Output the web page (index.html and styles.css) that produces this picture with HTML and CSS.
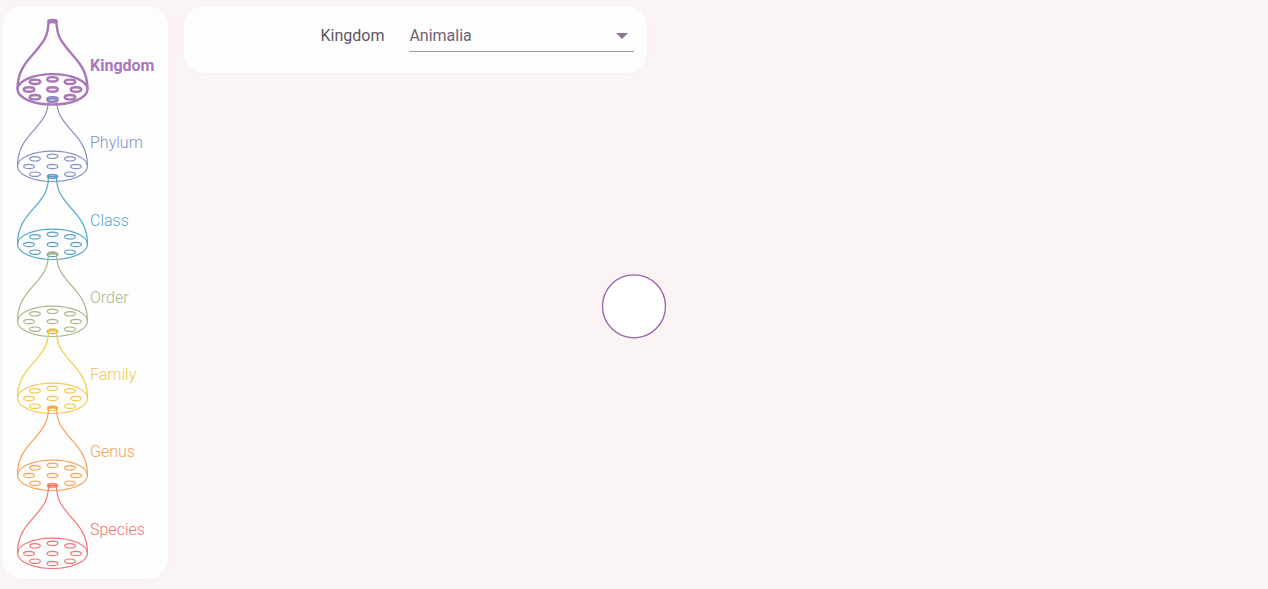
FILE: index.html
```
<!DOCTYPE html>
<html lang="en">
<head>
<meta charset="utf-8">
<meta name="viewport" content="width=device-width, initial-scale=1">
<title>Taxonomy</title>
<link rel="stylesheet" href="styles.css">
</head>
<body>
<svg class="canvas" aria-hidden="true"><circle class="node" cx="50%" cy="52%" r="31.5"/></svg>
<svg class="defs" aria-hidden="true">
  <symbol id="cone" viewBox="0 0 73 90">
    <path d="M32.500 3C32.400 18 28 23 19 34C10 44 1.500 53 1.500 71M40.500 3C40.600 18 45 23 54 34C63 44 71.500 53 71.500 71"/>
    <ellipse cx="36.500" cy="2.800" rx="4" ry=".9"/>
    <path d="M32.500 4.500Q36.500 3.500 40.500 4.500"/>
    <ellipse cx="36.500" cy="71.300" rx="35" ry="15.200"/>
    <ellipse cx="36.500" cy="61.300" rx="5.300" ry="2.200"/>
    <ellipse cx="19" cy="63.800" rx="5.300" ry="2.200"/>
    <ellipse cx="54" cy="63.800" rx="5.300" ry="2.200"/>
    <ellipse cx="13" cy="71.500" rx="5.300" ry="2.200"/>
    <ellipse cx="36.500" cy="71.500" rx="5.300" ry="2.200"/>
    <ellipse cx="60" cy="71.500" rx="5.300" ry="2.200"/>
    <ellipse cx="19" cy="79.200" rx="5.300" ry="2.200"/>
    <ellipse cx="54" cy="79.200" rx="5.300" ry="2.200"/>
    <ellipse cx="36.500" cy="81.500" rx="5.300" ry="2.200"/>
  </symbol>
</svg>
<div class="app">
  <nav class="ranks" aria-label="Taxonomic ranks">
    <button class="rank kingdom active" type="button"><svg class="cone"><use href="#cone"/></svg><span>Kingdom</span></button>
    <button class="rank phylum" type="button"><svg class="cone"><use href="#cone"/></svg><span>Phylum</span></button>
    <button class="rank class" type="button"><svg class="cone"><use href="#cone"/></svg><span>Class</span></button>
    <button class="rank order" type="button"><svg class="cone"><use href="#cone"/></svg><span>Order</span></button>
    <button class="rank family" type="button"><svg class="cone"><use href="#cone"/></svg><span>Family</span></button>
    <button class="rank genus" type="button"><svg class="cone"><use href="#cone"/></svg><span>Genus</span></button>
    <button class="rank species" type="button"><svg class="cone"><use href="#cone"/></svg><span>Species</span></button>
  </nav>
  <form class="filter">
    <label for="kingdom">Kingdom</label>
    <div class="field">
      <select id="kingdom"><option>Animalia</option></select>
      <svg class="arrow" viewBox="0 0 12 6" aria-hidden="true"><path d="M0 0H12L6 6Z"/></svg>
    </div>
  </form>
</div>
</body>
</html>
```
FILE: styles.css
```
* {
  box-sizing: border-box;
}

body {
  margin: 0;
  background: #faf4f4;
  color: #5f5563;
  font: 16px/20px Roboto, sans-serif;
}

.canvas {
  position: absolute;
  inset: 0;
  width: 100%;
  height: 100%;
}

.node {
  fill: #fff;
  stroke: #9862a8;
  stroke-width: 1.3;
}

.defs {
  position: absolute;
  width: 0;
  height: 0;
}

.app {
  position: relative;
  display: flex;
  align-items: flex-start;
  gap: 16px;
  min-height: 100vh;
  padding: 6px 2px 10px;
}

.ranks,
.filter {
  background: #fdfdfd;
  border-radius: 20px;
  box-shadow: 0 0 2px #f0eaec;
}

.ranks {
  display: grid;
  grid-auto-rows: minmax(77px, 1fr);
  align-self: stretch;
  flex: none;
  padding: 12px 14px 20px 14px;
}

.rank {
  display: flex;
  align-items: flex-start;
  gap: 1px;
  height: 77px;
  padding: 0;
  border: 0;
  background: none;
  color: var(--rank);
  font: 300 16px/20px Roboto, sans-serif;
  text-align: left;
  cursor: pointer;
}

.rank span {
  margin-top: 38px;
}

.cone {
  flex: none;
  width: 73px;
  height: 90px;
  overflow: visible;
  fill: none;
  stroke: currentColor;
  stroke-width: 1.2;
}

.rank.active {
  font-weight: 700;
}

.active .cone {
  stroke-width: 2.4;
}

.kingdom { --rank: #a977b8; }
.phylum { --rank: #8292c3; }
.class { --rank: #55a5c9; }
.order { --rank: #a8b889; }
.family { --rank: #f3ca4a; }
.genus { --rank: #f3a45a; }
.species { --rank: #f37474; }

.filter {
  display: flex;
  justify-content: flex-end;
  align-items: flex-start;
  gap: 25px;
  width: 100%;
  max-width: 463px;
  padding: 15px 13px 21px;
}

.filter label {
  padding-top: 5px;
}

.field {
  position: relative;
  flex: 0 1 225px;
}

.field select {
  width: 100%;
  height: 31px;
  padding: 0 24px 1px 0;
  border: 0;
  border-bottom: 1px solid #9c999e;
  border-radius: 0;
  appearance: none;
  background: none;
  color: #706077;
  font: 16px/20px Roboto, sans-serif;
}

.arrow {
  position: absolute;
  top: 12px;
  right: 6px;
  width: 12px;
  height: 6px;
  fill: #8c7599;
  pointer-events: none;
}
```
